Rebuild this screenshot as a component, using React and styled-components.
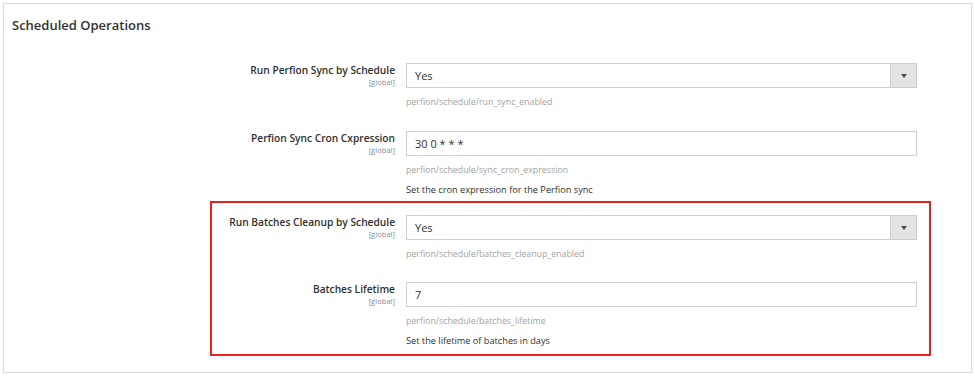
import React from "react";
import styled, { createGlobalStyle } from "styled-components";

const Global = createGlobalStyle`
  html, body { margin: 0; padding: 0; background: #fff; }
  body { font-family: "Open Sans", "Liberation Sans", sans-serif; color: #303030; }
  * { box-sizing: border-box; }
`;

const Panel = styled.section`
  margin: 3px 0 0 3px;
  width: 969px;
  height: 370px;
  border: 1px solid #dcdcdc;
  box-shadow: 1px 1px 1px rgba(0,0,0,0.04);
  background: #fff;
  padding: 13px 0 0 0;
`;

const Title = styled.h2`
  margin: 0 0 0 8px;
  font-size: 13px;
  font-weight: 600;
  line-height: 16px;
  color: #333;
`;

const Fields = styled.div`
  margin: ${(p) => p.$top}px 0 0 208px;
  width: 720px;
  display: flex;
  flex-direction: column;
  gap: 22px;
`;

const Group = styled.div`
  margin-left: -2px;
  border: 2px solid #e52420;
  padding: 12px 0 6px 0;
  width: 721px;
  display: flex;
  flex-direction: column;
  gap: 21px;
`;

const Row = styled.div`
  display: grid;
  grid-template-columns: 183px 511px;
  column-gap: 11px;
`;

const LabelCol = styled.div`
  text-align: right;
  display: flex;
  flex-direction: column;
  align-items: flex-end;
`;

const Label = styled.span`
  font-size: 10.2px;
  font-weight: 600;
  line-height: 14px;
  color: #303030;
  white-space: nowrap;
`;

const Scope = styled.span`
  font-size: 7.6px;
  line-height: 10px;
  color: #8a8a8a;
`;

const ControlCol = styled.div`
  display: flex;
  flex-direction: column;
`;

const Box = styled.div`
  height: 25px;
  border: 1px solid #cfcfcf;
  background: #fff;
  display: flex;
  align-items: center;
  font-size: 11px;
  color: #303030;
`;

const Value = styled.span`
  flex: 1;
  padding-left: 8px;
`;

const Toggle = styled.span`
  width: 26px;
  height: 100%;
  background: #e3e3e3;
  border-left: 1px solid #cfcfcf;
  display: flex;
  align-items: center;
  justify-content: center;
`;

const Arrow = styled.span`
  width: 0;
  height: 0;
  border-left: 3px solid transparent;
  border-right: 3px solid transparent;
  border-top: 4px solid #514943;
`;

const Hint = styled.div`
  margin-top: 7px;
  font-size: 8.8px;
  line-height: 14px;
  color: #a3a3a3;
`;

const Comment = styled.div`
  margin-top: 6px;
  font-size: 9.2px;
  line-height: 14px;
  color: #303030;
`;

function Field({ label, value, select, path, comment }) {
  return (
    <Row>
      <LabelCol>
        <Label>{label}</Label>
        <Scope>[global]</Scope>
      </LabelCol>
      <ControlCol>
        <Box>
          <Value>{value}</Value>
          {select && (
            <Toggle>
              <Arrow />
            </Toggle>
          )}
        </Box>
        <Hint>{path}</Hint>
        {comment && <Comment>{comment}</Comment>}
      </ControlCol>
    </Row>
  );
}

export default function App() {
  return (
    <>
      <Global />
      <Panel>
        <Title>Scheduled Operations</Title>
        <Fields $top={30}>
          <Field
            label="Run Perfion Sync by Schedule"
            value="Yes"
            select
            path="perfion/schedule/run_sync_enabled"
          />
          <Field
            label="Perfion Sync Cron Cxpression"
            value="30 0 * * *"
            path="perfion/schedule/sync_cron_expression"
            comment="Set the cron expression for the Perfion sync"
          />
        </Fields>
        <Fields $top={4}>
          <Group>
            <Field
              label="Run Batches Cleanup by Schedule"
              value="Yes"
              select
              path="perfion/schedule/batches_cleanup_enabled"
            />
            <Field
              label="Batches Lifetime"
              value="7"
              path="perfion/schedule/batches_lifetime"
              comment="Set the lifetime of batches in days"
            />
          </Group>
        </Fields>
      </Panel>
    </>
  );
}
